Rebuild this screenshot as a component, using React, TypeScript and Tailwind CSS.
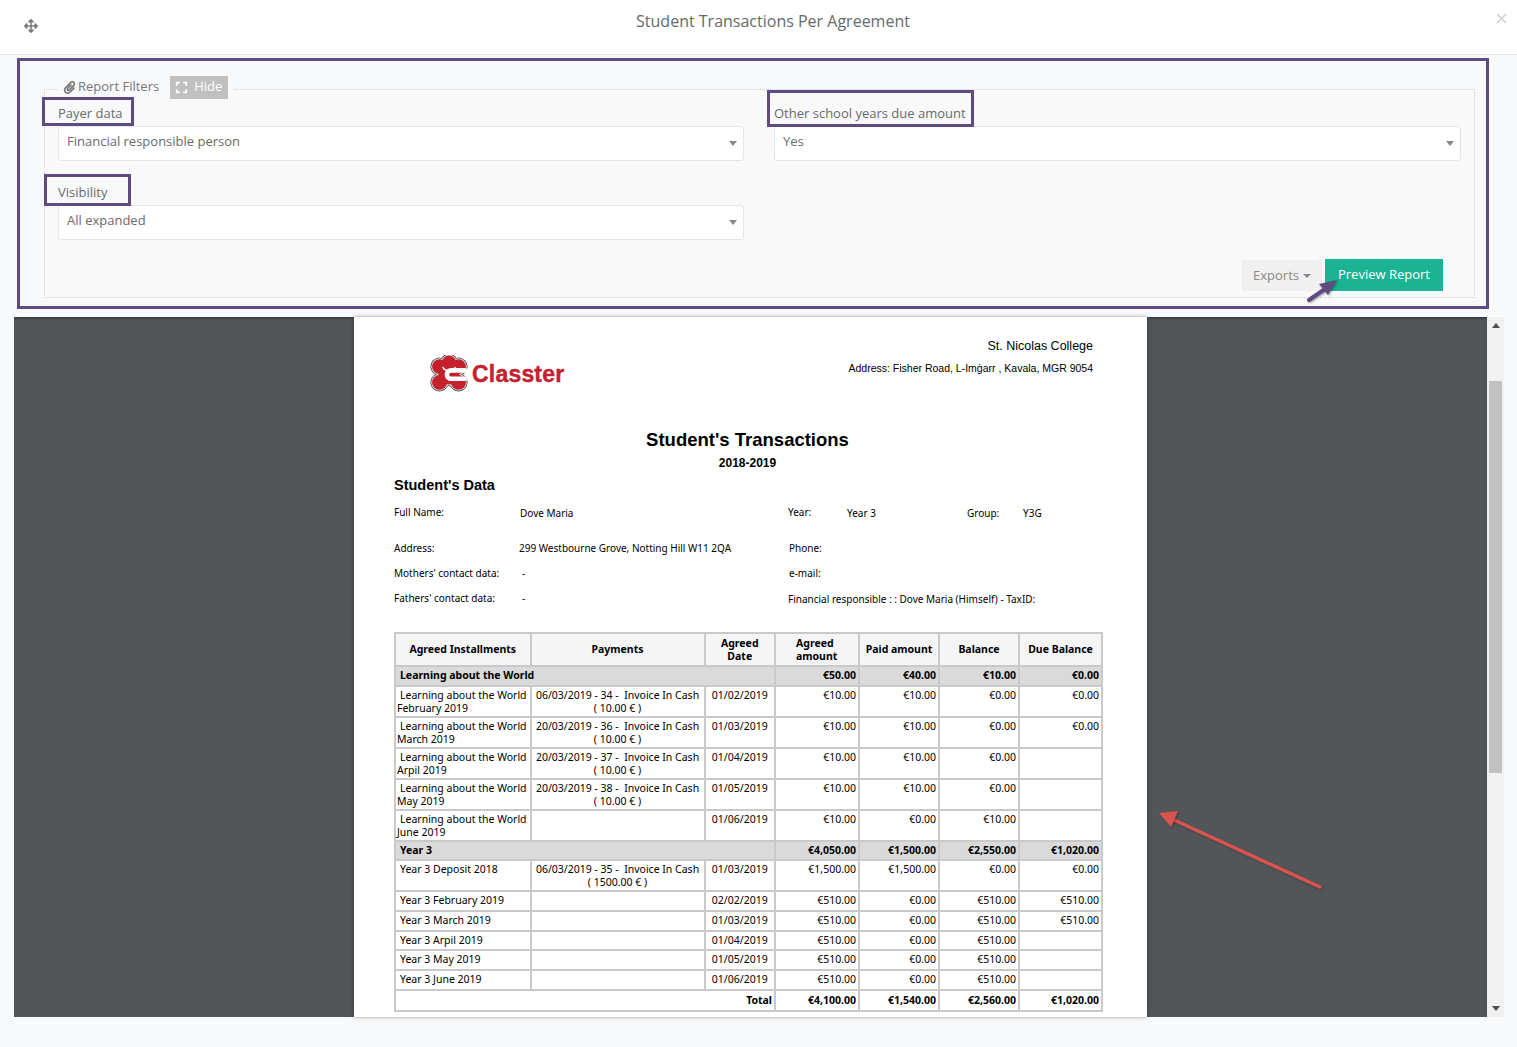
import React from "react";
import { FaArrowsAlt, FaPaperclip, FaExpand } from "react-icons/fa";

const ui = { fontFamily: '"Open Sans", sans-serif' };
const arial = { fontFamily: '"Liberation Sans", Arial, sans-serif' };
const tbl = { fontFamily: '"Noto Sans", sans-serif' };

function Field({ label, value, className }: { label: string; value: string; className?: string }) {
  return (
    <div className={className}>
      <div className="text-[13px] leading-[22px] text-[#676a6c] mb-[2px]">{label}</div>
      <div className="relative h-[35px] bg-white border border-[#e5e6e7] rounded-[3px] pl-[8px] pt-[5px] text-[13px] leading-[18px] text-[#676a6c]">
        {value}
        <span className="absolute right-[6px] top-[14px] w-0 h-0 border-x-[4px] border-x-transparent border-t-[5px] border-t-[#888]" />
      </div>
    </div>
  );
}

function Logo() {
  const lobes: [number, number, number][] = [
    [18, 7, 6.5], [9, 11, 7], [27, 11, 7], [9, 26, 7], [27, 26, 7], [18, 18, 10],
  ];
  return (
    <svg width="38" height="38" viewBox="0 0 36 36" className="shrink-0">
      {lobes.map(([x, y, r], i) => <circle key={"a" + i} cx={x} cy={y} r={r + 1.6} fill="#3a3a3a" />)}
      {lobes.map(([x, y, r], i) => <circle key={"b" + i} cx={x} cy={y} r={r + 0.9} fill="#dcdcdc" />)}
      {lobes.map(([x, y, r], i) => <circle key={"c" + i} cx={x} cy={y} r={r} fill="#c4202e" />)}
      <path d="M33 14.5 H20 a4 4 0 0 0 0 8 H33" fill="none" stroke="#fff" strokeWidth="4.4" strokeLinecap="round" />
      <circle cx="18" cy="7" r="3" fill="#c4202e" />
      <path d="M12 11.5 a7 7 0 0 0 12 0" fill="none" stroke="#fff" strokeWidth="1.6" />
    </svg>
  );
}

type Row = { a: string; a2?: string; p?: string; p2?: string; d: string; v: string[]; h: string };

const rows1: Row[] = [
  { a: "Learning about the World", a2: "February 2019", p: "06/03/2019 - 34 -  Invoice In Cash", p2: "( 10.00 € )", d: "01/02/2019", v: ["€10.00", "€10.00", "€0.00", "€0.00"], h: "h-[31px]" },
  { a: "Learning about the World", a2: "March 2019", p: "20/03/2019 - 36 -  Invoice In Cash", p2: "( 10.00 € )", d: "01/03/2019", v: ["€10.00", "€10.00", "€0.00", "€0.00"], h: "h-[31px]" },
  { a: "Learning about the World", a2: "Arpil 2019", p: "20/03/2019 - 37 -  Invoice In Cash", p2: "( 10.00 € )", d: "01/04/2019", v: ["€10.00", "€10.00", "€0.00", ""], h: "h-[31px]" },
  { a: "Learning about the World", a2: "May 2019", p: "20/03/2019 - 38 -  Invoice In Cash", p2: "( 10.00 € )", d: "01/05/2019", v: ["€10.00", "€10.00", "€0.00", ""], h: "h-[31px]" },
  { a: "Learning about the World", a2: "June 2019", d: "01/06/2019", v: ["€10.00", "€0.00", "€10.00", ""], h: "h-[31px]" },
];
const rows2: Row[] = [
  { a: "Year 3 Deposit 2018", p: "06/03/2019 - 35 -  Invoice In Cash", p2: "( 1500.00 € )", d: "01/03/2019", v: ["€1,500.00", "€1,500.00", "€0.00", "€0.00"], h: "h-[31px]" },
  { a: "Year 3 February 2019", d: "02/02/2019", v: ["€510.00", "€0.00", "€510.00", "€510.00"], h: "h-[20px]" },
  { a: "Year 3 March 2019", d: "01/03/2019", v: ["€510.00", "€0.00", "€510.00", "€510.00"], h: "h-[19.5px]" },
  { a: "Year 3 Arpil 2019", d: "01/04/2019", v: ["€510.00", "€0.00", "€510.00", ""], h: "h-[19.5px]" },
  { a: "Year 3 May 2019", d: "01/05/2019", v: ["€510.00", "€0.00", "€510.00", ""], h: "h-[20px]" },
  { a: "Year 3 June 2019", d: "01/06/2019", v: ["€510.00", "€0.00", "€510.00", ""], h: "h-[19.5px]" },
];

const cell = "border-2 border-[#c9c9c9] align-top p-0 pt-[2px]";

function DataRow({ r }: { r: Row }) {
  return (
    <tr className={r.h}>
      <td className={cell + " pl-[1px]"}>
        <div className="pl-[3px] whitespace-nowrap">{r.a}</div>
        {r.a2 && <div className="whitespace-nowrap">{r.a2}</div>}
      </td>
      <td className={cell + " text-center"}>
        {r.p && <div className="whitespace-pre">{r.p}</div>}
        {r.p2 && <div>{r.p2}</div>}
      </td>
      <td className={cell + " text-center"}>{r.d}</td>
      {r.v.map((x, i) => (
        <td key={i} className={cell + " text-right pr-[2px]"}>{x}</td>
      ))}
    </tr>
  );
}

function Group({ name, v }: { name: string; v: string[] }) {
  return (
    <tr className="h-[19.5px] bg-[#dadada] font-bold">
      <td colSpan={3} className="border-2 border-[#c9c9c9] p-0 pl-[4px]">{name}</td>
      {v.map((x, i) => (
        <td key={i} className="border-2 border-[#c9c9c9] p-0 pr-[2px] text-right">{x}</td>
      ))}
    </tr>
  );
}

function Th({ children }: { children: React.ReactNode }) {
  return <th className="border-2 border-[#c9c9c9] bg-[#f5f5f5] p-0 font-bold text-center leading-[13px]">{children}</th>;
}

export default function App() {
  return (
    <div className="relative w-[1517px] h-[1047px] overflow-hidden bg-[#f8f9fb]" style={ui}>
      {/* header */}
      <div className="relative h-[55px] bg-white border-b border-[#e4e5e7] flex justify-center">
        <div className="ml-[29px] pt-[10px] text-[16px] leading-[22px] text-[#676a6c]">Student Transactions Per Agreement</div>
        <div className="absolute left-[24px] top-[19px] text-[#77797c]"><FaArrowsAlt size={14} /></div>
        <svg className="absolute left-[1496px] top-[13px]" width="11" height="11" viewBox="0 0 11 11">
          <path d="M1 1 L10 10 M10 1 L1 10" stroke="#cfcfcf" strokeWidth="1.6" />
        </svg>
      </div>

      {/* filter frame */}
      <div className="mt-[3px] mx-[17px] w-[1472px] h-[251px] border-[3px] border-[#5f4b80] pt-[28px] pl-[24px]">
        <div className="relative w-[1431px] h-[209px] border border-dotted border-[#cfcfcf] bg-[#f9f9f9] px-[13px] pt-[12px]">
          <div className="absolute left-[13px] top-[-15px] w-[175px] h-[24px] bg-[#f8f9fb] flex items-center pl-[5px] gap-[11px]">
            <div className="flex items-center gap-[2px] text-[13px] text-[#777]">
              <FaPaperclip size={13} className="text-[#777]" />
              <span>Report Filters</span>
            </div>
            <div className="h-[23px] w-[58px] bg-[#c0c0c0] text-white text-[13px] flex items-center pl-[5px] gap-[6px]">
              <FaExpand size={13} />
              <span>Hide</span>
            </div>
          </div>
          <div className="grid grid-cols-[686px_687px] gap-x-[30px]">
            <Field label="Payer data" value="Financial responsible person" />
            <Field label="Other school years due amount" value="Yes" />
            <Field className="mt-[20px]" label="Visibility" value="All expanded" />
          </div>
          <div className="absolute right-[31px] top-[169px] flex items-start gap-[3px] text-[13px]">
            <div className="mt-[1px] w-[80px] h-[31px] bg-[#f0f0f0] text-[#888] flex items-center justify-center gap-[4px]">
              Exports
              <span className="w-0 h-0 border-x-[4px] border-x-transparent border-t-[4px] border-t-[#888]" />
            </div>
            <div className="w-[118px] h-[32px] bg-[#1ab394] text-white flex items-center justify-center">Preview Report</div>
          </div>
        </div>
      </div>

      {/* viewer */}
      <div className="mt-[8px] ml-[14px] w-[1490px] h-[700px] flex">
        <div className="relative w-[1473px] h-full bg-[#525659] shadow-[inset_0_3px_3px_-2px_rgba(0,0,0,0.45)] pl-[340px]">
          <div className="w-[793px] h-full bg-white overflow-hidden pl-[40px] text-black shadow-[0_0_4px_rgba(0,0,0,0.4)]">
            <div className="relative w-[707px]" style={arial}>
              {/* report head */}
              <div className="flex justify-between h-[90px] pr-[8px]">
                <div className="ml-[36px] mt-[38px] flex items-center h-[38px] gap-[4px]">
                  <Logo />
                  <span className="text-[#c4202e] text-[23px] font-bold leading-none tracking-[0.2px]" style={{ WebkitTextStroke: "0.4px #c4202e" }}>Classter</span>
                </div>
                <div className="text-right pt-[21px]">
                  <div className="text-[12.5px] leading-[16px]">St. Nicolas College</div>
                  <div className="text-[10.5px] leading-[14px] mt-[7px]">Address: Fisher Road, L-Imġarr , Kavala, MGR 9054</div>
                </div>
              </div>
              <div className="text-center font-bold text-[18.5px] leading-[22px] mt-[22px]">Student's Transactions</div>
              <div className="text-center font-bold text-[12px] leading-[16px] mt-[4px]">2018-2019</div>
              <div className="font-bold text-[14.5px] leading-[18px] mt-[5px]">Student's Data</div>
            </div>

            <div className="relative w-[707px] text-[10px] leading-[14px] h-[127px] mt-[11px]" style={tbl}>
              <div className="flex h-[36px]">
                <div className="w-[126px]">Full Name:</div>
                <div className="w-[268px] pt-[1px]">Dove Maria</div>
                <div className="w-[59px]">Year:</div>
                <div className="w-[120px] pt-[1px]">Year 3</div>
                <div className="w-[56px] pt-[1px]">Group:</div>
                <div className="pt-[1px]">Y3G</div>
              </div>
              <div className="flex h-[25px]">
                <div className="w-[125px]">Address:</div>
                <div className="w-[270px]">299 Westbourne Grove, Notting Hill W11 2QA</div>
                <div>Phone:</div>
              </div>
              <div className="flex h-[25px]">
                <div className="w-[128px]">Mothers' contact data:</div>
                <div className="w-[267px]">-</div>
                <div>e-mail:</div>
              </div>
              <div className="flex h-[25px]">
                <div className="w-[128px]">Fathers' contact data:</div>
                <div className="w-[266px]">-</div>
                <div className="pt-[1px]">Financial responsible : : Dove Maria (Himself) - TaxID:</div>
              </div>
            </div>

            <table className="table-fixed border-collapse w-[707px] text-[10.5px] leading-[13px]" style={tbl}>
              <colgroup>
                <col className="w-[135.5px]" />
                <col className="w-[174px]" />
                <col className="w-[70.5px]" />
                <col className="w-[84px]" />
                <col className="w-[80px]" />
                <col className="w-[80px]" />
                <col className="w-[83px]" />
              </colgroup>
              <tbody>
                <tr className="h-[33px]">
                  <Th>Agreed Installments</Th>
                  <Th>Payments</Th>
                  <Th><div className="w-[42px] mx-auto">Agreed Date</div></Th>
                  <Th><div className="w-[50px] mx-auto text-left pl-[4px]">Agreed amount</div></Th>
                  <Th>Paid amount</Th>
                  <Th>Balance</Th>
                  <Th>Due Balance</Th>
                </tr>
                <Group name="Learning about the World" v={["€50.00", "€40.00", "€10.00", "€0.00"]} />
                {rows1.map((r, i) => <DataRow key={i} r={r} />)}
                <Group name="Year 3" v={["€4,050.00", "€1,500.00", "€2,550.00", "€1,020.00"]} />
                {rows2.map((r, i) => <DataRow key={i} r={r} />)}
                <tr className="h-[21.5px] font-bold">
                  <td colSpan={3} className="border-2 border-[#c9c9c9] p-0 pr-[2px] text-right">Total</td>
                  {["€4,100.00", "€1,540.00", "€2,560.00", "€1,020.00"].map((x, i) => (
                    <td key={i} className="border-2 border-[#c9c9c9] p-0 pr-[2px] text-right">{x}</td>
                  ))}
                </tr>
              </tbody>
            </table>
          </div>
        </div>
        {/* scrollbar */}
        <div className="relative w-[17px] h-full bg-[#f1f1f1] flex flex-col items-center">
          <span className="mt-[6px] w-0 h-0 border-x-[4px] border-x-transparent border-b-[5px] border-b-[#505050]" />
          <div className="mt-[53px] w-[13px] h-[392px] bg-[#c1c1c1]" />
          <span className="mt-auto mb-[6px] w-0 h-0 border-x-[4px] border-x-transparent border-t-[5px] border-t-[#505050]" />
        </div>
      </div>

      {/* annotations */}
      <div className="absolute left-[42px] top-[97px] w-[92px] h-[29px] border-[3px] border-[#5f4b80]" />
      <div className="absolute left-[44px] top-[174px] w-[87px] h-[32px] border-[3px] border-[#5f4b80]" />
      <div className="absolute left-[767px] top-[90px] w-[207px] h-[37px] border-[3px] border-[#5f4b80]" />
      <svg className="absolute left-0 top-0 pointer-events-none" width="1517" height="1047">
        <defs>
          <filter id="s" x="-30%" y="-30%" width="160%" height="160%">
            <feDropShadow dx="1" dy="1" stdDeviation="1" floodOpacity="0.35" />
          </filter>
        </defs>
        <path d="M1309 300 L1325 289" stroke="#5f4b80" strokeWidth="4" strokeLinecap="round" filter="url(#s)" />
        <path d="M1337 280 L1319 284 L1328 295 Z" fill="#5f4b80" filter="url(#s)" />
        <path d="M1320 887 L1172 819" stroke="#d9534f" strokeWidth="3.5" strokeLinecap="round" filter="url(#s)" />
        <path d="M1159 813 L1178 811 L1171 827 Z" fill="#d9534f" filter="url(#s)" />
      </svg>
    </div>
  );
}
